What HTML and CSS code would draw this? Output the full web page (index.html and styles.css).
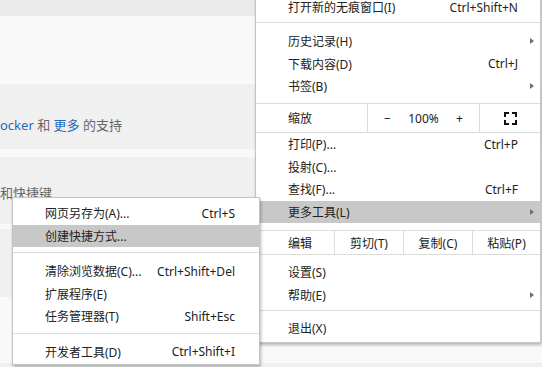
FILE: index.html
```
<!DOCTYPE html>
<html lang="zh-CN">
<head>
    <meta charset="UTF-8">
    <title>更多工具</title>
    <link rel="stylesheet" href="styles.css">
</head>
<body>
    <div class="page">
        <div class="band band-top"></div>
        <div class="band band-light band-68"></div>
        <div class="band band-gray band-support">
            <p class="note"><span class="link">ocker</span> 和 <span class="link">更多</span> 的支持</p>
        </div>
        <div class="band band-light band-8"></div>
        <div class="band band-gray band-keys">
            <p class="note">和快捷键</p>
        </div>
        <div class="band band-light band-5"></div>
        <div class="band band-gray band-68"></div>
        <div class="band band-light band-66"></div>
        <div class="band band-gray band-rest"></div>
    </div>

    <div class="menu main-menu">
        <div class="item"><span class="label">打开新的无痕窗口(I)</span><span class="key">Ctrl+Shift+N</span><span class="tail"></span></div>
        <div class="sep sep-top"></div>
        <div class="item"><span class="label">历史记录(H)</span><span class="tail"><i class="arrow"></i></span></div>
        <div class="item"><span class="label">下载内容(D)</span><span class="key">Ctrl+J</span><span class="tail"></span></div>
        <div class="item"><span class="label">书签(B)</span><span class="tail"><i class="arrow"></i></span></div>
        <div class="zoom-row">
            <div class="cell cell-label">缩放</div>
            <div class="cell cell-zoom"><span>−</span><span>100%</span><span>+</span></div>
            <div class="cell cell-full">
                <svg width="13" height="13" viewBox="0 0 13 13"><path d="M1 5V1H5M8 1H12V5M12 8V12H8M5 12H1V8" fill="none" stroke="#111" stroke-width="2"/></svg>
            </div>
        </div>
        <div class="item"><span class="label">打印(P)...</span><span class="key">Ctrl+P</span><span class="tail"></span></div>
        <div class="item"><span class="label">投射(C)...</span><span class="tail"></span></div>
        <div class="item"><span class="label">查找(F)...</span><span class="key">Ctrl+F</span><span class="tail"></span></div>
        <div class="item active"><span class="label">更多工具(L)</span><span class="tail"><i class="arrow"></i></span></div>
        <div class="edit-row">
            <div class="cell cell-edit">编辑</div>
            <div class="cell cell-btn">剪切(T)</div>
            <div class="cell cell-btn">复制(C)</div>
            <div class="cell cell-last">粘贴(P)</div>
        </div>
        <div class="item"><span class="label">设置(S)</span><span class="tail"></span></div>
        <div class="item"><span class="label">帮助(E)</span><span class="tail"><i class="arrow"></i></span></div>
        <div class="sep sep-exit"></div>
        <div class="item"><span class="label">退出(X)</span><span class="tail"></span></div>
    </div>

    <div class="menu sub-menu">
        <div class="item"><span class="label">网页另存为(A)...</span><span class="key">Ctrl+S</span></div>
        <div class="item active"><span class="label">创建快捷方式...</span></div>
        <div class="sep"></div>
        <div class="item"><span class="label">清除浏览数据(C)...</span><span class="key">Ctrl+Shift+Del</span></div>
        <div class="item"><span class="label">扩展程序(E)</span></div>
        <div class="item"><span class="label">任务管理器(T)</span><span class="key">Shift+Esc</span></div>
        <div class="sep"></div>
        <div class="item"><span class="label">开发者工具(D)</span><span class="key">Ctrl+Shift+I</span></div>
    </div>
</body>
</html>
```
FILE: styles.css
```
body {
    margin: 0;
    width: 542px;
    height: 367px;
    overflow: hidden;
    position: relative;
    font-family: "Noto Sans", "Noto Sans CJK SC", sans-serif;
    font-size: 12px;
    color: #222;
}
.page {
    display: flex;
    flex-direction: column;
    height: 100%;
}
.band-top { height: 16px; background: #ebebeb; }
.band-light { background: #f9f9f9; }
.band-gray { background: #f0f0f0; }
.band-68 { height: 68px; }
.band-66 { height: 66px; }
.band-8 { height: 8px; }
.band-5 { height: 5px; }
.band-rest { flex: 1; }
.band-support {
    height: 65px;
    box-sizing: border-box;
    padding-top: 32px;
}
.band-keys {
    height: 67px;
    box-sizing: border-box;
    padding-top: 27px;
}
.note {
    margin: 0;
    font-size: 13px;
    line-height: 18px;
    color: #666;
}
.link {
    color: #1f6bb8;
}

/* popup menus */
.menu {
    position: absolute;
    background: #fff;
    border: 1px solid #c4c4c4;
    box-shadow: 1px 2px 3px rgba(0, 0, 0, 0.28);
}
.main-menu {
    left: 255px;
    top: -5px;
    width: 284px;
    padding-bottom: 2.5px;
}
.sub-menu {
    left: 12px;
    top: 197px;
    width: 246px;
    padding-top: 4px;
    padding-bottom: 1px;
}
.item {
    display: flex;
    align-items: center;
    height: 22.5px;
    padding-left: 32px;
    white-space: nowrap;
}
.item.active {
    background: #c8c8c8;
}
.label {
    flex: 1;
}
.main-menu .tail {
    width: 22px;
    height: 100%;
    display: flex;
    align-items: center;
    justify-content: flex-end;
    padding-right: 6px;
    box-sizing: border-box;
}
.sub-menu .item {
    padding-right: 24px;
}
.arrow {
    width: 0;
    height: 0;
    border-top: 3.5px solid transparent;
    border-bottom: 3.5px solid transparent;
    border-left: 4px solid #707070;
}
.sep {
    height: 1px;
    background: #dcdcdc;
    margin: 5px 0 7px;
}
.sep-top { margin: 3.5px 0 7px; }
.sep-exit { margin: 4px 0 6px; }

/* zoom and edit rows */
.zoom-row, .edit-row {
    display: flex;
    border-top: 1px solid #dcdcdc;
    border-bottom: 1px solid #dcdcdc;
}
.zoom-row {
    height: 28px;
    margin-top: 5.5px;
}
.edit-row {
    height: 23px;
    margin: 7px 0 6px;
}
.cell {
    box-sizing: border-box;
    display: flex;
    align-items: center;
}
.cell-label {
    width: 112px;
    padding-left: 32px;
    border-right: 1px solid #dcdcdc;
}
.cell-zoom {
    width: 112px;
    padding: 0 16px;
    justify-content: space-between;
    border-right: 1px solid #dcdcdc;
}
.cell-full {
    flex: 1;
    justify-content: center;
}
.cell-edit {
    width: 79px;
    padding-left: 32px;
    border-right: 1px solid #dcdcdc;
}
.cell-btn {
    width: 69px;
    justify-content: center;
    border-right: 1px solid #dcdcdc;
}
.cell-last {
    flex: 1;
    justify-content: center;
}
```
